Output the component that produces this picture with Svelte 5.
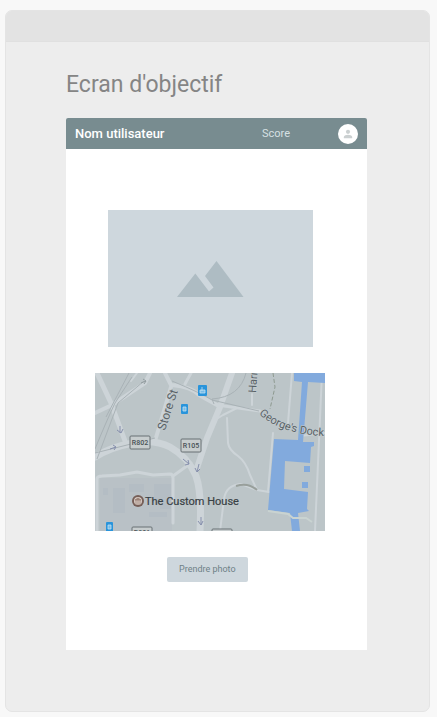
<script>
  const title = "Ecran d'objectif";
  const user = 'Nom utilisateur';
</script>

<div class="page">
  <section class="frame">
    <div class="frame-bar"></div>
    <div class="frame-body">
      <h1>{title}</h1>
      <div class="screen">
        <header>
          <strong>{user}</strong>
          <span class="score">Score</span>
          <button class="avatar" aria-label="Profil">
            <svg viewBox="0 0 20 20" width="20" height="20" aria-hidden="true">
              <circle cx="10" cy="7.8" r="2.1" />
              <path d="M5.8 14.2v-1.1c0-1.6 2.7-2.4 4.2-2.4s4.2.8 4.2 2.4v1.1z" />
            </svg>
          </button>
        </header>
        <main>
          <div class="photo">
            <svg viewBox="0 0 205 137" role="img" aria-label="Photo">
              <path d="M69 87 87.300 63.500 101 81.500 105.500 77.500 97 66 108.500 51 135.500 87z" />
            </svg>
          </div>

          <svg class="map" viewBox="0 0 230 158" role="img" aria-label="Plan du quartier">
            <defs>
              <path id="dock-label" d="M164 41Q185 61 229 63" />
            </defs>
            <rect width="230" height="158" fill="#bcc5c8" />
            <g fill="#b2bbc3">
              <path d="M5 105h72v53H5z" opacity=".3" />
              <path d="M18 115h12v25H18zM34 111h15v8H34zM59 111h17v25H65v-9h-6zM54 139h18v5H54zM8 115h5v7H8z" opacity=".7" />
            </g>
            <g fill="none" stroke="#cdd4d8" stroke-linecap="round" stroke-linejoin="round">
              <path stroke-width="7" d="M0 84Q16 74 38 70 60 66 75 74 93 84 101 103 107 120 105 158" />
              <path stroke-width="6" d="M137 0 125 34 112 65 102 95" />
              <path stroke-width="5" d="M2 0 16 30 30 68" />
              <path stroke-width="4" d="M0 40 17 32 50 10 55 0M77 12Q97 14 104 22L122 32M60 68 76 14M76 12 70 0" />
              <path stroke-width="3" d="M90 11 96 0M78 103 96 90M2 158V106Q2 103 7 103L25 102 42 99 58 102 75 101Q78 101 78 105V150" />
              <path stroke-width="3" d="M122 32 165 38" />
              <path stroke-width="2" d="M120 47 128 42 142 35M157 21V32M132 45 133 70Q134 77 143 83 151 89 155 102L162 117 174 119M162 117 146 111Q131 112 129 126L125 158M197 0 193 50M178 60 173 119M227 0 220 158M205 63 230 60M36 8 42 0" />
            </g>
            <g fill="none" stroke="#a9b2b6" stroke-width="1">
              <path d="M0 76Q11 49 20 30L37 4M2 86 23 30 49 8M34 0 11 44M0 80 60 65M77 8Q106 20 117 27L164 38M119 31 117 26Q145 24 151 0" />
              <path stroke="#8e9a91" stroke-dasharray="4 2" d="M178 0 180 14 175 36" />
              <path stroke="#989f9b" stroke-width="2" d="M141 113Q153 109 162 117" />
            </g>
            <path fill="#82aadd" d="M199 0H230V10L213 9 208 69H219V73L216 74 215 90 190 88 189 116 213 119 212 136 214 138 203 140 205 158H197L195 140 173 137 179 66 203 67 207 9 199 8z" />
            <path fill="#82aadd" d="M209 93h6v6h-6zM207 109h6v6h-6z" />
            <path d="M173 138 193 141 198 145 211 145 217 149" fill="none" stroke="#c9d3d1" stroke-width="2" />

            <g class="arrows">
              <path d="M25 53v7M22 57l4 3 2-4M15 76l6-2M18 72l3 2-2 3M88 86l6 5M93 87l1 4-4 1M104 91l-2 8M100 95l2 4 3-3M106 144v8M103 148l3 4 2-4" />
              <path stroke="#929c9f" d="M46 10l5-2M48 6l3 2-2 3" />
            </g>

            <g class="streets">
              <text transform="translate(70 58) rotate(-72)" font-size="12">Store St</text>
              <text transform="translate(161 20) rotate(-86)" font-size="11">Harı</text>
              <text font-size="11"><textPath href="#dock-label">George's Dock</textPath></text>
            </g>

            <g class="shields">
              <rect x="35" y="63" width="20" height="13" rx="1" />
              <text x="45" y="72">R802</text>
              <rect x="86" y="66" width="20" height="13" rx="1" />
              <text x="96" y="75">R105</text>
              <rect x="37" y="154" width="20" height="13" rx="1" />
              <text x="47" y="162">R801</text>
              <rect x="117" y="156" width="20" height="13" rx="1" />
            </g>

            <g fill="#2994db">
              <rect x="103" y="12" width="9" height="11" rx="1" />
              <rect x="86" y="31" width="7" height="10" rx="1" />
              <rect x="11" y="149" width="7" height="10" rx="1" />
            </g>
            <path d="M105 17h5v3h-5zM107 14v4M88 34h3v4h-3zM13 152h3v4h-3z" fill="#77bce8" stroke="#c4e1f1" stroke-width=".8" />

            <circle cx="43" cy="128" r="6" fill="#765f58" />
            <circle cx="43" cy="128" r="4" fill="#dacdc6" />
            <path d="M40 127l3-2 3 2zM41 127v3M43 127v3M45 127v3M40 131h6" fill="#9b8176" stroke="#9b8176" stroke-width=".8" />
            <text class="place" x="50" y="132">The Custom House</text>
          </svg>

          <button class="take">Prendre photo</button>
        </main>
      </div>
    </div>
  </section>
</div>

<style>
  :global(body) {
    margin: 0;
    background: #f8f8f8;
  }

  .page {
    padding: 10px 7px 5px 5px;
    font-family: Roboto, 'Liberation Sans', sans-serif;
  }

  .frame {
    border: 1px solid #e4e4e4;
    border-radius: 7px;
    background: #ededed;
    overflow: hidden;
  }

  .frame-bar {
    height: 30px;
    background: #e3e3e3;
    border-bottom: 1px solid #e0e0e0;
  }

  .frame-body {
    padding: 29px 62px 61px 60px;
  }

  h1 {
    margin: 0 0 19px;
    color: #858585;
    font-size: 23px;
    line-height: 28px;
    font-weight: 400;
  }

  .screen {
    background: #fff;
    border-radius: 2px 2px 0 0;
  }

  header {
    display: flex;
    align-items: center;
    height: 31px;
    padding: 0 9px;
    border-radius: 2px 2px 0 0;
    background: #788c90;
    color: #fff;
  }

  strong {
    flex: 1;
    font-size: 13px;
    font-weight: 500;
  }

  .score {
    margin-right: 48px;
    color: #d6e0e3;
    font-size: 11px;
  }

  .avatar {
    width: 20px;
    height: 20px;
    padding: 0;
    border: 0;
    border-radius: 50%;
    background: #fff;
  }

  .avatar svg {
    display: block;
    fill: #cbd0d1;
  }

  main {
    display: flex;
    flex-direction: column;
    align-items: flex-start;
    padding: 61px 42px 68px 29px;
  }

  .photo {
    align-self: stretch;
    margin: 0 12px 26px 13px;
    background: #ced7dd;
  }

  .photo svg {
    display: block;
    width: 100%;
    fill: #aebcc3;
  }

  .map {
    display: block;
    width: 100%;
    margin-bottom: 26px;
    overflow: hidden;
  }

  .arrows {
    fill: none;
    stroke: #8790ad;
    stroke-width: 1;
  }

  .streets {
    fill: #586166;
    stroke: #c5cdd0;
    stroke-width: 1px;
    paint-order: stroke;
  }

  .shields rect {
    fill: #c7cdce;
    stroke: #697174;
    stroke-width: 1;
  }

  .shields text {
    fill: #485155;
    font-size: 7px;
    font-weight: 500;
    text-anchor: middle;
  }

  .place {
    fill: #394145;
    stroke: #394145;
    stroke-width: 0.2px;
    font-size: 11px;
  }

  .take {
    height: 25px;
    margin-left: 72px;
    padding: 0 12px 2px;
    border: 0;
    border-radius: 2px;
    background: #ced7dd;
    color: #6f8187;
    font-family: inherit;
    font-size: 9px;
    white-space: nowrap;
  }
</style>
